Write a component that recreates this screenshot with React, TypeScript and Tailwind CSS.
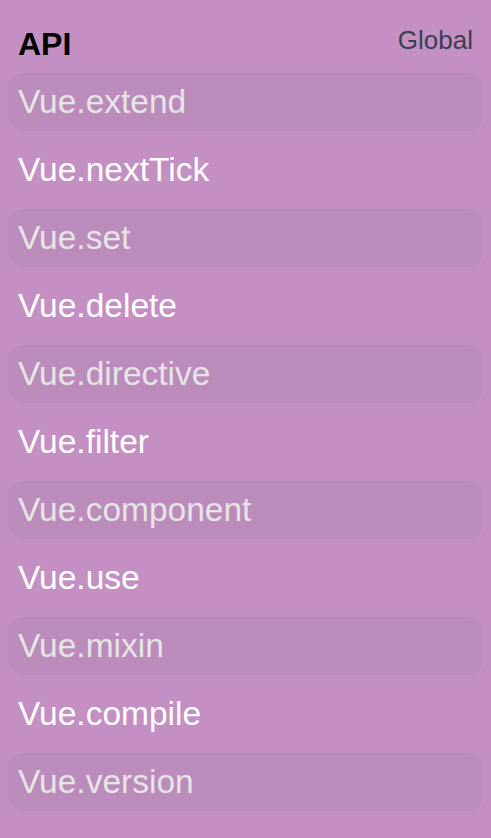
const items = [
  "Vue.extend",
  "Vue.nextTick",
  "Vue.set",
  "Vue.delete",
  "Vue.directive",
  "Vue.filter",
  "Vue.component",
  "Vue.use",
  "Vue.mixin",
  "Vue.compile",
  "Vue.version",
];

export default function App() {
  return (
    <div
      className="min-h-screen w-full bg-[#c490c4] px-2 pt-[26px] pb-6"
      style={{ fontFamily: '"Liberation Sans", Arial, sans-serif' }}
    >
      <div className="flex flex-col gap-[10px]">
        {/* Header */}
        <div className="flex items-start justify-between px-[10px]">
          <h1 className="text-[32px] font-bold leading-[1.15] text-black">API</h1>
          <span className="text-[26px] leading-[1.15] text-[#374151]">Global</span>
        </div>

        {items.map((item, i) => (
          <div
            key={item}
            className={
              i % 2 === 0
                ? "flex h-[58px] items-center rounded-2xl bg-[#bb8bbb] px-[10px] text-[33.5px] leading-[1.15] text-[#e5e5e5]"
                : "flex h-[58px] items-center rounded-2xl px-[10px] text-[33.5px] leading-[1.15] text-white"
            }
          >
            {item}
          </div>
        ))}
      </div>
    </div>
  );
}
